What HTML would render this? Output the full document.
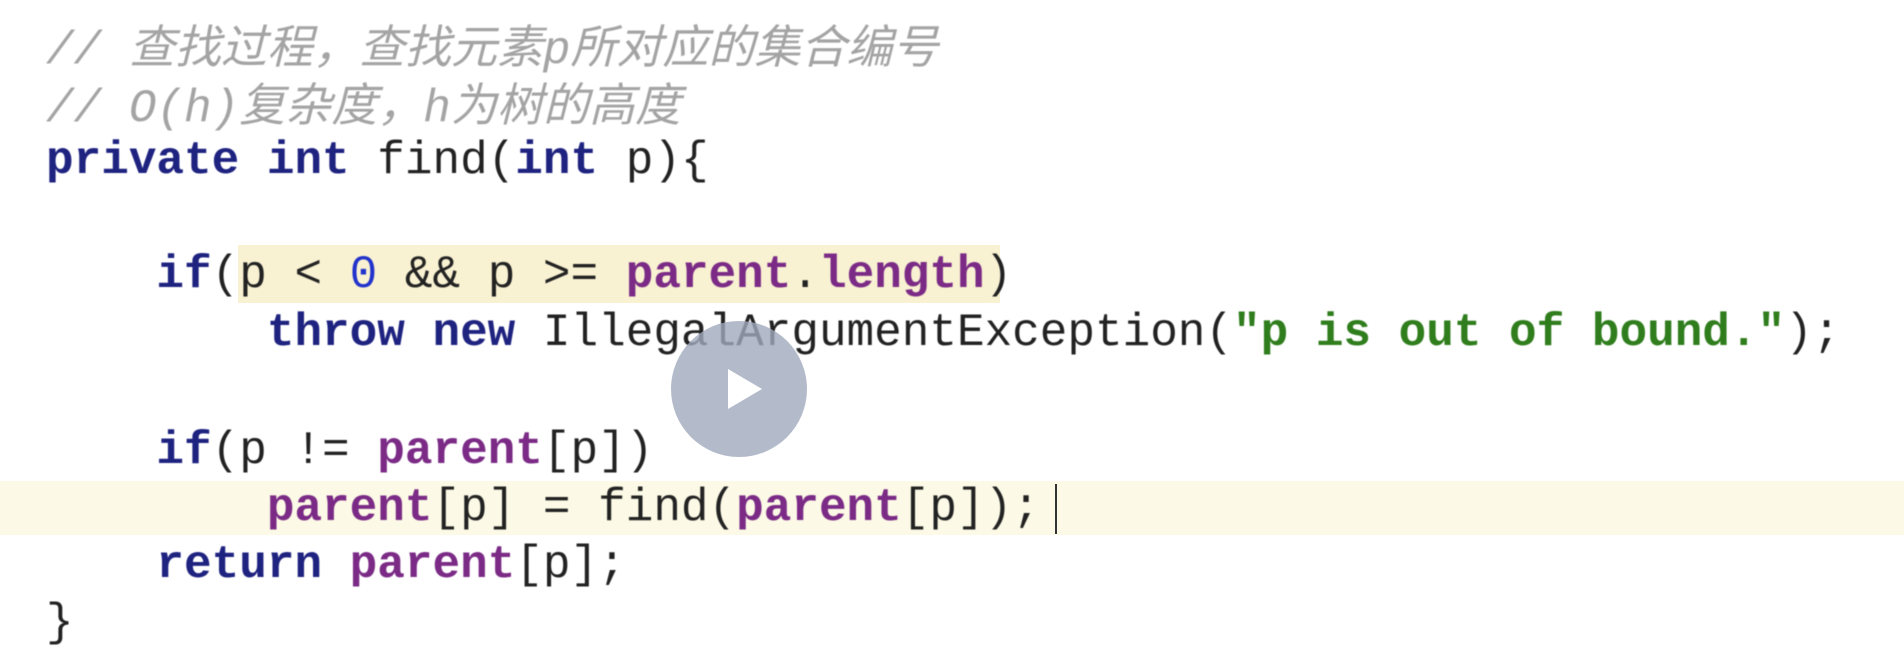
<!DOCTYPE html>
<html><head><meta charset="utf-8"><style>
body{margin:0;width:1904px;height:668px;background:#fff;overflow:hidden;position:relative;font-family:"Liberation Mono",monospace;}
.l{position:absolute;left:46px;font-size:46px;line-height:58px;white-space:pre;color:#222;filter:blur(0.6px);}
.k{color:#1f2380;font-weight:bold}
.v{color:#7b2b86;font-weight:bold}
.s{color:#2f7d1c;font-weight:bold}
.c{color:#a4a4a4;font-style:italic;font-family:"Liberation Mono","Noto Sans CJK SC",monospace;}
.n{color:#2233cc}
</style></head><body>
<div style="position:absolute;left:0;top:481px;width:1904px;height:54px;background:#fcfae6"></div>
<div style="position:absolute;left:238px;top:245px;width:762px;height:58px;background:#f8f1d2"></div>
<div class="l c" style="top:22px">// 查找过程，查找元素p所对应的集合编号</div>
<div class="l c" style="top:80px">// O(h)复杂度，h为树的高度</div>
<div class="l" style="top:132px"><span class="k">private int</span> find(<span class="k">int</span> p){</div>
<div class="l" style="top:246px">    <span class="k">if</span>(p &lt; <span class="n">0</span> &amp;&amp; p &gt;= <span class="v">parent</span>.<span class="v">length</span>)</div>
<div class="l" style="top:304px">        <span class="k">throw new</span> IllegalArgumentException(<span class="s">"p is out of bound."</span>);</div>
<div class="l" style="top:422px">    <span class="k">if</span>(p != <span class="v">parent</span>[p])</div>
<div class="l" style="top:479px">        <span class="v">parent</span>[p] = find(<span class="v">parent</span>[p]);</div>
<div style="position:absolute;left:1055px;top:484px;width:2px;height:50px;background:#333"></div>
<div class="l" style="top:536px">    <span class="k">return</span> <span class="v">parent</span>[p];</div>
<div class="l" style="top:594px">}</div>
<div style="position:absolute;left:671px;top:321px;width:136px;height:136px;border-radius:50%;background:rgba(160,170,190,0.8)"></div>
<div style="position:absolute;left:728px;top:369px;width:0;height:0;border-left:34px solid #fff;border-top:20px solid transparent;border-bottom:20px solid transparent"></div>
</body></html>
